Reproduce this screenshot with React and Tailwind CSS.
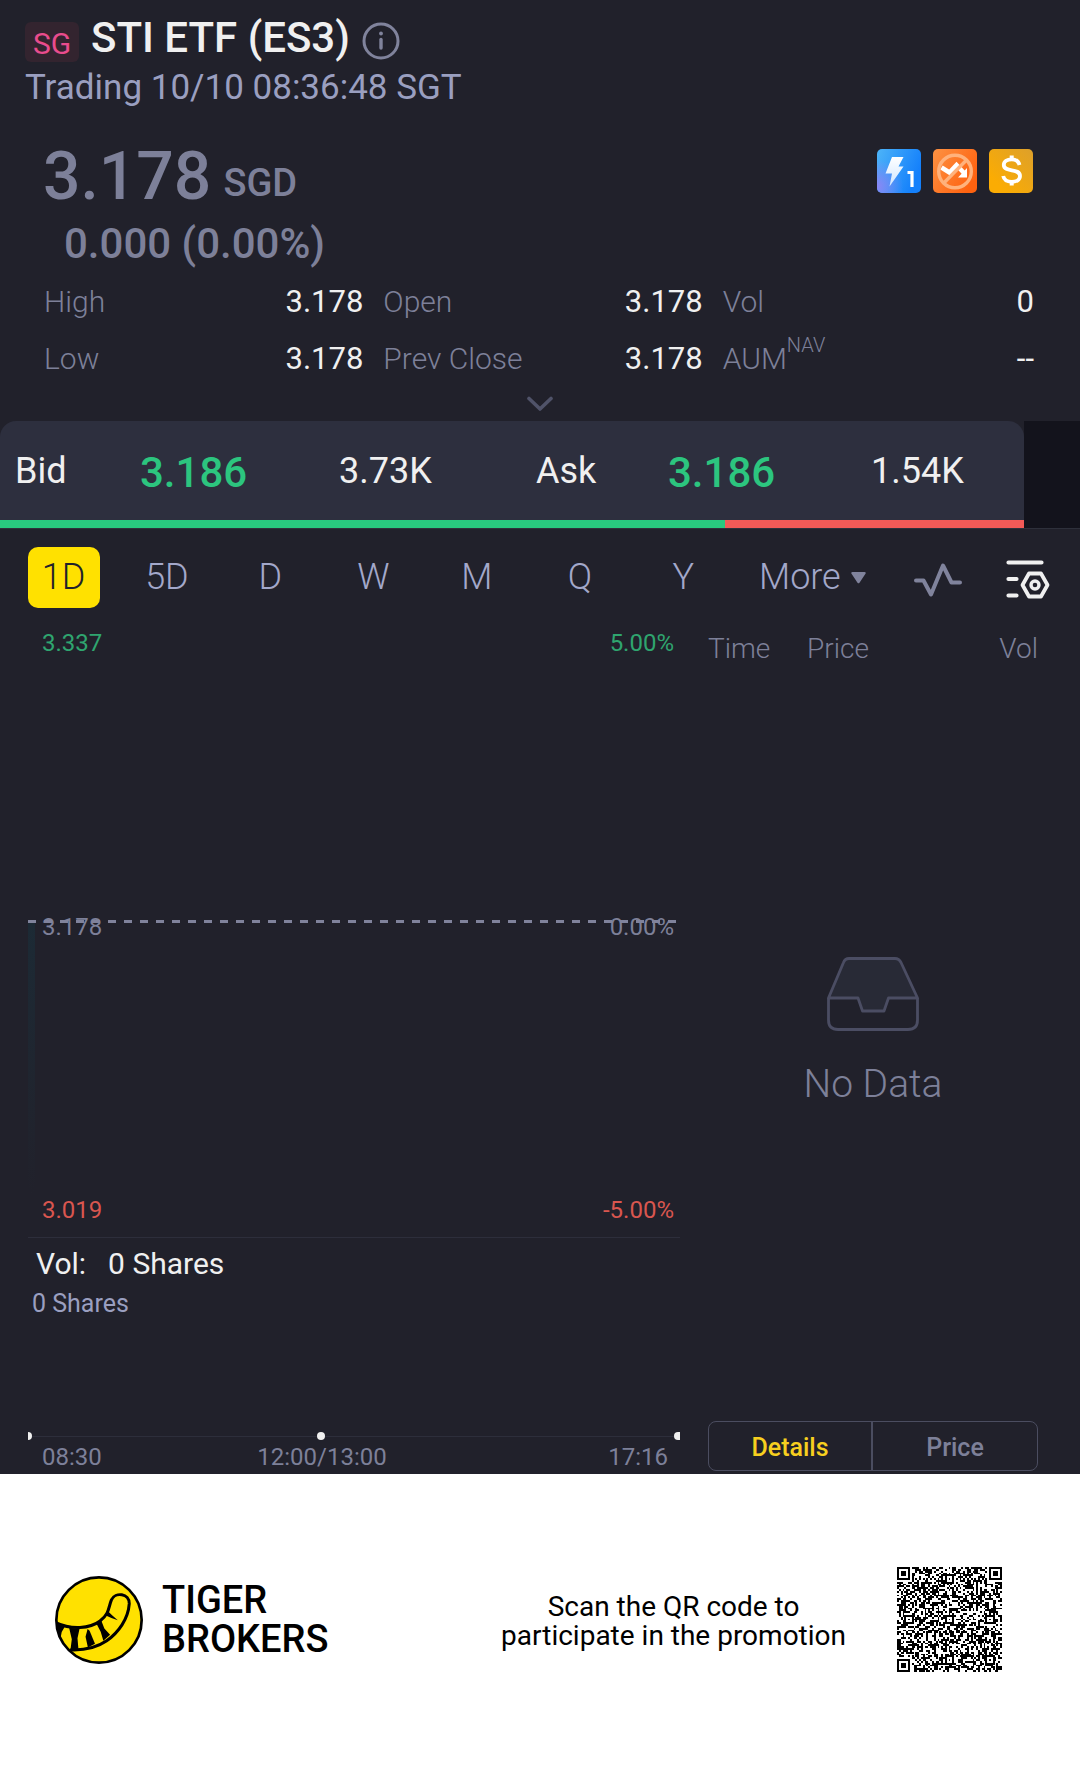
import React, { useState } from "react";

const stats = [
  [["High", "3.178"], ["Open", "3.178"], ["Vol", "0"]],
  [["Low", "3.178"], ["Prev Close", "3.178"], ["AUM", "--", "NAV"]],
];

const periods = ["1D", "5D", "D", "W", "M", "Q", "Y"];

function InfoIcon() {
  return (
    <svg width="38" height="38" viewBox="0 0 38 38" fill="none" stroke="#80839c" strokeWidth="3">
      <circle cx="19" cy="19" r="17" />
      <path d="M19 17.5V26" strokeLinecap="round" strokeWidth="3.4" />
      <circle cx="19" cy="11.5" r="1.9" fill="#80839c" stroke="none" />
    </svg>
  );
}

function FlashBadge() {
  return (
    <svg width="44" height="44" viewBox="0 0 44 44" role="img" aria-label="Level 1 quotes">
      <defs>
        <linearGradient id="blue" x1="0" y1="0" x2="1" y2="0.4">
          <stop offset="0" stopColor="#4db4f8" />
          <stop offset="1" stopColor="#1480fb" />
        </linearGradient>
        <radialGradient id="violet" cx="0" cy="0.85" r="0.6">
          <stop offset="0" stopColor="#8a86f5" />
          <stop offset="1" stopColor="#8a86f5" stopOpacity="0" />
        </radialGradient>
        <linearGradient id="bolt" x1="0" y1="0" x2="0" y2="1">
          <stop offset="0" stopColor="#ffffff" />
          <stop offset="1" stopColor="#cfe6ff" />
        </linearGradient>
      </defs>
      <rect width="44" height="44" rx="5" fill="url(#blue)" />
      <rect width="44" height="44" rx="5" fill="url(#violet)" />
      <path d="M15 8H26.5L21.5 17.5H26.5L12.5 37.5L15 24.5H8.5Z" fill="url(#bolt)" />
      <path d="M30.5 23.5H35V38" fill="none" stroke="#fff" strokeWidth="3.2" />
    </svg>
  );
}

function NoShortBadge() {
  return (
    <svg width="44" height="44" viewBox="0 0 44 44" role="img" aria-label="No short selling">
      <defs>
        <linearGradient id="orange" x1="0" y1="0" x2="1" y2="0.6">
          <stop offset="0" stopColor="#fd9243" />
          <stop offset="1" stopColor="#fe6210" />
        </linearGradient>
      </defs>
      <rect width="44" height="44" rx="5" fill="url(#orange)" />
      <path d="M8.5 18.5L16.5 23.5L23.5 16L31 24" fill="none" stroke="#fff" strokeWidth="4.5" />
      <path d="M34 19V28.5H25Z" fill="#fff" />
      <circle cx="22" cy="22.5" r="16.3" fill="none" stroke="#ffb27c" strokeWidth="3.4" />
      <path d="M10.8 34L33.5 11" stroke="#ffb27c" strokeWidth="3.4" />
    </svg>
  );
}

function DollarBadge() {
  return (
    <svg width="44" height="44" viewBox="0 0 44 44" role="img" aria-label="Dividend">
      <defs>
        <linearGradient id="gold" x1="1" y1="0" x2="0.2" y2="0.8">
          <stop offset="0" stopColor="#dda02b" />
          <stop offset="1" stopColor="#fbac03" />
        </linearGradient>
      </defs>
      <rect width="44" height="44" rx="5" fill="url(#gold)" />
      <path
        d="M30.5 16C29.5 12 26.5 10.3 22.7 10.3C18 10.3 14.8 12.4 14.8 15.9C14.8 24 31 18.5 31 27C31 30.8 27.5 32.8 22.8 32.8C18 32.8 15 31 14.2 27"
        fill="none"
        stroke="#fff"
        strokeWidth="3.8"
      />
      <path d="M22.7 6.5V10.5M22.7 32.5V36.5" stroke="#fff" strokeWidth="4" />
    </svg>
  );
}

function WaveIcon() {
  return (
    <svg width="48" height="34" viewBox="0 0 48 34" fill="none" stroke="#80839c" strokeWidth="4" strokeLinecap="round" strokeLinejoin="round">
      <path d="M2 17.5H9.5L17 31.5L29 2.5L37.5 19.5H46" />
    </svg>
  );
}

function SettingsIcon() {
  return (
    <svg width="44" height="40" viewBox="0 0 44 40" fill="none" stroke="#f0f0f0" strokeWidth="4.2" strokeLinecap="round" strokeLinejoin="round">
      <path d="M2.5 3.5H35.5M2.5 20H10.5M2.5 36.5H10.5" />
      <path d="M23 14.5H35L41.5 26L35 37.5H23L16.5 26Z" strokeWidth="3.8" />
      <circle cx="29" cy="26" r="4" strokeWidth="3.4" />
    </svg>
  );
}

function TrayIcon() {
  return (
    <svg width="92" height="74" viewBox="0 0 92 74" fill="none" stroke="#4b4d63" strokeWidth="2.8" strokeLinejoin="round">
      <path d="M1.5 41L16.5 5.5Q18 1.5 22 1.5H68Q72 1.5 74 5.5L90.5 41H61.500L57 54H35.5L31 41Z" fill="#282a36" />
      <path d="M1.5 41V63Q1.5 72.5 11 72.5H81Q90.5 72.5 90.5 63V41" />
    </svg>
  );
}

function TigerLogo() {
  return (
    <svg width="88" height="88" viewBox="46 47 262 262">
      <clipPath id="disc">
        <circle cx="177" cy="178" r="127" />
      </clipPath>
      <circle cx="177" cy="178" r="127" fill="#ffe100" stroke="#000" strokeWidth="8" />
      <g clipPath="url(#disc)">
        <path
          d="M48 186C95 208 150 204 180 181C208 160 205 140 214 118C225 94 268 98 267 130C264 175 235 215 200 240C165 264 130 269 90 267"
          fill="none"
          stroke="#000"
          strokeWidth="9"
        />
        <path d="M48 184L75 198L66 214L61 240L48 232Z" />
        <path d="M88 201L119 204L113 232L116 267L92 267L96 235Z" />
        <path d="M143 205L149 210L165 249L144 260L137 228Z" />
        <path d="M170 190L184 180L193 203L210 222L190 240L182 213Z" />
        <path d="M194 163L203 151L216 164L233 179L214 172Z" />
      </g>
    </svg>
  );
}

const QR_SIZE = 57;

function finderModule(x, y) {
  const ring = Math.max(Math.abs(x - 3), Math.abs(y - 3));
  return ring === 3 || ring <= 1;
}

function qrPath() {
  let seed = 20231;
  let d = "";
  const marks = [6, 28, 50];
  for (let y = 0; y < QR_SIZE; y++) {
    for (let x = 0; x < QR_SIZE; x++) {
      seed = (seed * 1103515 + 12345) % 2147483647;
      let on = seed / 2147483647 < 0.5;
      const right = x >= QR_SIZE - 8;
      const bottom = y >= QR_SIZE - 8;
      const inFinder = (x < 8 && y < 8) || (right && y < 8) || (x < 8 && bottom);
      if (inFinder) {
        const fx = right ? x - (QR_SIZE - 7) : x;
        const fy = bottom ? y - (QR_SIZE - 7) : y;
        on = fx >= 0 && fy >= 0 && fx < 7 && fy < 7 && finderModule(fx, fy);
      } else {
        if (y === 6) on = x % 2 === 0;
        if (x === 6) on = y % 2 === 0;
        for (const my of marks) {
          for (const mx of marks) {
            const ring = Math.max(Math.abs(x - mx), Math.abs(y - my));
            const corner = (mx === 6 && my !== 28) || (my === 6 && mx !== 28);
            if (ring <= 2 && !corner) on = ring !== 1;
          }
        }
      }
      if (on) d += `M${x} ${y}h1v1h-1z`;
    }
  }
  return d;
}

const qr = qrPath();

function Quote({ label, price, size }) {
  return (
    <>
      <span>{label}</span>
      <span className="text-[42px] leading-[103px] font-medium text-[#2cc57f]">{price}</span>
      <span>{size}</span>
    </>
  );
}

export default function App() {
  const [period, setPeriod] = useState("1D");
  return (
    <div className="bg-white font-[Roboto,sans-serif]">
      <main className="bg-[#21212b] text-[#7d8099]">
        <header>
          <div className="flex items-end pt-3.5 pl-[25px]">
            <span className="h-10 w-[54px] rounded-md bg-[#33242f] pt-1 text-center text-[30px] leading-9 text-[#e94c8d]">SG</span>
            <h1 className="ml-3 text-[42px] leading-[48px] font-medium text-[#f0f0f0]">STI ETF (ES3)</h1>
            <button aria-label="Information" className="ml-3 self-start pt-2"><InfoIcon /></button>
          </div>
          <p className="mt-1 pl-[25px] text-[35px] leading-[44px] text-[#9a9fc0]">Trading 10/10 08:36:48 SGT</p>
          <div className="mt-[31px] flex items-end pr-[47px] pl-[43px] font-medium">
            <span className="text-[66px] leading-[72px]">3.178</span>
            <span className="ml-3 text-[38px] leading-[60px]">SGD</span>
            <div className="mt-2 ml-auto flex gap-3 self-start">
              <FlashBadge />
              <NoShortBadge />
              <DollarBadge />
            </div>
          </div>
          <p className="mt-1.5 pl-16 text-[42px] leading-[50px] font-medium">0.000 (0.00%)</p>
          <dl className="mt-1 grid grid-cols-3 pr-[18px] pl-11 text-[30px] leading-[57px]">
            {stats.flat().map(([name, value, sup], i) => (
              <div key={name} className={i % 3 === 2 ? "flex justify-between pr-7" : "flex justify-between pr-5"}>
                <dt className="flex items-start font-light">
                  {name}
                  {sup && <span className="text-xl leading-[30px]">{sup}</span>}
                </dt>
                <dd className="text-[31px] text-[#f0f0f0]">{value}</dd>
              </div>
            ))}
          </dl>
          <button aria-label="Show more figures" className="flex h-[34px] w-full items-center justify-center">
            <svg width="28" height="16" viewBox="0 0 28 16" fill="none" stroke="#505369" strokeWidth="3.6" strokeLinecap="round" strokeLinejoin="round">
              <path d="M3 2.5L14 13L25 2.5" />
            </svg>
          </button>
        </header>

        <section className="border-b border-[#2e303b] bg-[linear-gradient(90deg,#21212b_50%,#13131c_50%)] pr-14">
          <div className="bg-[#21212b]">
            <div className="grid h-[99px] grid-cols-[125fr_199fr_197fr_132fr_203fr_153fr] items-start rounded-t-2xl bg-[#2d2f3e] pl-[15px] text-[36px] leading-[100px] text-[#f0f0f0]">
              <Quote label="Bid" price="3.186" size="3.73K" />
              <Quote label="Ask" price="3.186" size="1.54K" />
            </div>
          </div>
          <div className="grid h-2 grid-cols-[725fr_299fr]">
            <div className="bg-[#29c97f]" />
            <div className="bg-[#f25a57]" />
          </div>
        </section>

        <nav className="grid grid-cols-[723fr_345fr] pt-[18px] pl-3 text-[36px] leading-[61px] font-light text-[#a3a8ca]">
          <div className="grid grid-cols-7 justify-items-center">
            {periods.map((p) => (
              <button
                key={p}
                aria-pressed={p === period}
                onClick={() => setPeriod(p)}
                className={p === period ? "w-[72px] rounded-[10px] bg-[#ffe100] text-[#21212b]" : "w-[72px]"}
              >
                {p}
              </button>
            ))}
          </div>
          <div className="flex items-center pr-[30px] pl-6">
            <button className="flex items-center gap-2.5">
              More
              <svg width="15" height="12" viewBox="0 0 15 12" fill="#80839c">
                <path d="M1.5 0H13.5Q15.5 0.3 14.3 2L8.5 10.8Q7.5 11.8 6.5 10.8L0.7 2Q-0.5 0.3 1.5 0Z" />
              </svg>
            </button>
            <button aria-label="Indicators" className="ml-auto pt-1"><WaveIcon /></button>
            <button aria-label="Chart settings" className="ml-11 pt-0.5"><SettingsIcon /></button>
          </div>
        </nav>

        <section className="grid grid-cols-[652fr_330fr] gap-7 pr-[42px] pl-7">
          <div className="text-[24px] leading-[30px]">
            <div className="relative flex h-[630px] flex-col justify-between border-b border-[#2d2e3b] pt-[19px] pr-1.5 pb-[11px] pl-3.5 leading-8">
              <div className="flex justify-between text-[#2fa56f]"><span>3.337</span><span>5.00%</span></div>
              <div className="flex justify-between"><span>3.178</span><span>0.00%</span></div>
              <div className="flex justify-between text-[#d9564f]"><span>3.019</span><span>-5.00%</span></div>
              <div className="absolute top-[312px] right-[3px] left-0 h-[3px] bg-[repeating-linear-gradient(90deg,#80839c_0_8px,transparent_8px_16px)]" />
              <div className="absolute top-[315px] left-0 h-[270px] w-[7px] bg-linear-to-b from-[#1c2a35] to-[#21212b]" />
            </div>
            <p className="flex gap-[22px] pt-2 pl-2 text-[30px] leading-9 text-[#f0f0f0]"><span>Vol:</span><span>0 Shares</span></p>
            <p className="mt-[7px] pl-1 text-[25px] text-[#9a9fc0]">0 Shares</p>
            <div className="mt-[113px] flex items-center justify-between">
              <div className="h-2 w-1 rounded-r-full bg-[#f0f0f0]" />
              <div className="h-px flex-[285] bg-[#2d2e3b]" />
              <div className="size-2 rounded-full bg-[#f0f0f0]" />
              <div className="h-px flex-[349] bg-[#2d2e3b]" />
              <div className="h-2 w-1.5 rounded-l-full bg-[#f0f0f0]" />
            </div>
            <div className="grid grid-cols-[215fr_130fr_281fr] pt-0.5 pr-3 pb-0.5 pl-3.5">
              <span>08:30</span>
              <span className="text-center">12:00/13:00</span>
              <span className="text-right">17:16</span>
            </div>
          </div>

          <div className="flex flex-col pb-[3px]">
            <div className="flex pt-[23px] text-[28px] leading-9 font-light">
              <span className="w-[99px]">Time</span>
              <span>Price</span>
              <span className="ml-auto">Vol</span>
            </div>
            <div className="flex flex-1 flex-col items-center justify-center pb-[23px]">
              <TrayIcon />
              <p className="mt-[29px] text-[39px] leading-[48px] font-light">No Data</p>
            </div>
            <div className="grid h-[50px] grid-cols-2 rounded-lg border border-[#4b4d60] text-[25px] font-medium">
              <button className="border-r-2 border-[#4b4d60] pt-1 text-[#f7cf1f]">Details</button>
              <button className="pt-1">Price</button>
            </div>
          </div>
        </section>
      </main>

      <footer className="flex items-center py-[93px] pr-[78px] pl-[55px] text-black">
        <TigerLogo />
        <p className="ml-[19px] text-[38px] leading-[39px] font-medium">TIGER<br />BROKERS</p>
        <p className="mt-0.5 mr-[51px] ml-auto text-center text-[28px] leading-[29px]">
          Scan the QR code to<br />participate in the promotion
        </p>
        <svg width="105" height="105" viewBox="0 0 57 57" shapeRendering="crispEdges" role="img" aria-label="QR code">
          <path d={qr} />
        </svg>
      </footer>
    </div>
  );
}
